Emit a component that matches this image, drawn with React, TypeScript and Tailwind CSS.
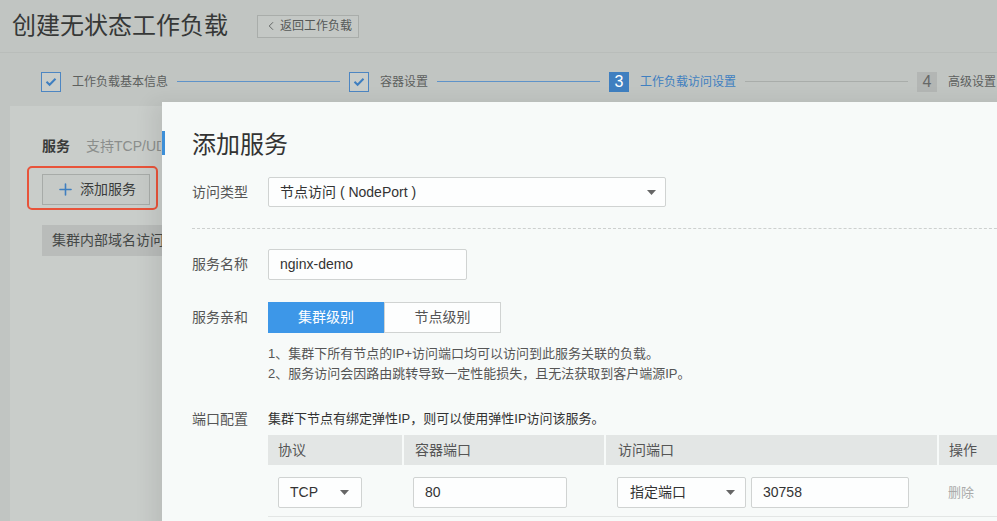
import { ChevronLeft, Plus } from 'lucide-react';

const FONT = { fontFamily: '"Liberation Sans", "Noto Sans CJK SC", sans-serif' };

function DoneBox() {
  return (
    <div className="shrink-0 w-[20px] h-[20px] border border-[#4d86c2] bg-[#c9cdca] flex items-center justify-center">
      <svg width="12" height="10" viewBox="0 0 12 10" fill="none">
        <path d="M1.5 4.8 L4.6 7.8 L10.5 1.8" stroke="#3f7fc0" strokeWidth="2" />
      </svg>
    </div>
  );
}

function Caret() {
  return (
    <svg width="9" height="5" viewBox="0 0 9 5" className="shrink-0">
      <path d="M0 0 H9 L4.5 5 Z" fill="#666" />
    </svg>
  );
}

function StepLine({ done }: { done: boolean }) {
  return <div className={`shrink-0 w-[163px] h-px mx-[9px] ${done ? 'bg-[#5f93c9]' : 'bg-[#a9adaa]'}`} />;
}

export default function App() {
  return (
    <div style={FONT} className="relative w-[997px] h-[521px] overflow-hidden bg-[#c1c5c2] text-[#383a39]">
      {/* page under the dialog */}
      <div className="h-[53px] flex items-center pl-[12px] border-b border-[#b9bdba]">
        <h1 className="text-[24px] leading-[32px] text-[#363837]">创建无状态工作负载</h1>
        <button className="ml-[29px] h-[23px] px-[6px] flex items-center gap-[2px] border border-[#a9adaa] text-[12px] text-[#555857] bg-[#c4c8c5]">
          <ChevronLeft size={14} strokeWidth={1.5} />
          返回工作负载
        </button>
      </div>

      <div className="h-[53px] pt-[4px] flex items-center pl-[41px] text-[12px] whitespace-nowrap">
        <DoneBox />
        <span className="shrink-0 ml-[11px] text-[#5d605e]">工作负载基本信息</span>
        <StepLine done />
        <DoneBox />
        <span className="shrink-0 ml-[11px] text-[#5d605e]">容器设置</span>
        <StepLine done />
        <div className="shrink-0 w-[20px] h-[20px] bg-[#3f7fc0] text-white text-[16px] leading-[20px] text-center">3</div>
        <span className="shrink-0 ml-[11px] text-[#3f7fc0]">工作负载访问设置</span>
        <StepLine done={false} />
        <div className="shrink-0 w-[20px] h-[20px] bg-[#b3b6b4] text-[#666867] text-[16px] leading-[20px] text-center">4</div>
        <span className="shrink-0 ml-[11px] text-[#5d605e]">高级设置</span>
      </div>

      <div className="ml-[10px] w-[960px] h-[420px] bg-[#c9cdca] pl-[32px] pt-[30px]">
        <div className="flex items-center h-[20px] w-[119px] overflow-hidden whitespace-nowrap text-[14px]">
          <span className="font-bold text-[#3a3c3b]">服务</span>
          <span className="ml-[16px] text-[#8b8e8c]">支持TCP/UDP协议</span>
        </div>
        <div className="relative mt-[18px] w-[108px] h-[31px]">
          <button className="w-full h-full flex items-center justify-center gap-[5px] border border-[#a7aba8] bg-[#c6cac7] text-[14px] text-[#3a3c3b]">
            <Plus size={19} strokeWidth={2} color="#3f7fc0" />
            添加服务
          </button>
          <div className="absolute -left-[15px] -top-[8px] w-[131px] h-[44px] rounded-[5px] border-2 border-[#e8533a]" />
        </div>
        <div className="mt-[20px] h-[31px] w-[120px] overflow-hidden whitespace-nowrap bg-[#b9bcba] flex items-center pl-[10px] text-[14px] text-[#444746]">
          集群内部域名访问
        </div>
      </div>

      {/* dialog */}
      <div className="absolute left-[162px] top-[102px] w-[860px] h-[440px] bg-[#f7faf9] pl-[30px] pt-[27px] shadow-[-10px_0_18px_rgba(0,0,0,0.07)] text-[#333]">
        <div className="absolute left-0 top-[29px] w-[3px] h-[24px] bg-[#3d8fd8]" />
        <h2 className="text-[24px] leading-[32px] h-[32px] text-[#333]">添加服务</h2>

        <div className="mt-[16px] flex items-center">
          <label className="w-[76px] text-[14px] text-[#555]">访问类型</label>
          <div className="w-[398px] h-[30px] border border-[#d0d3d2] rounded-[2px] bg-[#fdfefe] flex items-center justify-between pl-[11px] pr-[9px] text-[14px]">
            <span>节点访问 ( NodePort )</span>
            <Caret />
          </div>
        </div>

        <div className="mt-[21px] border-t border-dashed border-[#cdd0cf]" />

        <div className="mt-[20px] flex items-center">
          <label className="w-[76px] text-[14px] text-[#555]">服务名称</label>
          <div className="w-[199px] h-[31px] border border-[#d0d3d2] rounded-[2px] bg-[#fdfefe] flex items-center pl-[11px] text-[14px]">
            nginx-demo
          </div>
        </div>

        <div className="mt-[22px] flex items-center">
          <label className="w-[76px] text-[14px] text-[#555]">服务亲和</label>
          <div className="flex h-[31px] text-[14px]">
            <div className="w-[116px] bg-[#3d97e8] text-white flex items-center justify-center">集群级别</div>
            <div className="w-[117px] border border-[#d0d3d2] bg-[#fdfefe] text-[#555] flex items-center justify-center">节点级别</div>
          </div>
        </div>

        <div className="mt-[11px] ml-[76px] text-[13px] leading-[20px] text-[#555]">
          <p>1、集群下所有节点的IP+访问端口均可以访问到此服务关联的负载。</p>
          <p>2、服务访问会因路由跳转导致一定性能损失，且无法获取到客户端源IP。</p>
        </div>

        <div className="mt-[25px] flex items-center leading-[20px]">
          <label className="w-[76px] text-[14px] text-[#555]">端口配置</label>
          <span className="text-[13px] text-[#333]">集群下节点有绑定弹性IP，则可以使用弹性IP访问该服务。</span>
        </div>

        <div className="mt-[6px] ml-[76px] w-[760px] text-[14px]">
          <div className="grid grid-cols-[134px_202px_333px_1fr] h-[30px] bg-[#e3e6e5] text-[#555]">
            <div className="flex items-center pl-[10px]">协议</div>
            <div className="flex items-center pl-[11px] border-l-2 border-[#f7faf9]">容器端口</div>
            <div className="flex items-center pl-[12px] border-l-2 border-[#f7faf9]">访问端口</div>
            <div className="flex items-center pl-[10px] border-l-2 border-[#f7faf9]">操作</div>
          </div>
          <div className="grid grid-cols-[134px_202px_333px_1fr] h-[52px] pt-[12px] border-b border-[#e3e6e5]">
            <div className="pl-[10px]">
              <div className="w-[84px] h-[31px] border border-[#d0d3d2] rounded-[2px] bg-[#fdfefe] flex items-center justify-between pl-[11px] pr-[12px]">
                <span>TCP</span>
                <Caret />
              </div>
            </div>
            <div className="pl-[11px]">
              <div className="w-[154px] h-[31px] border border-[#d0d3d2] rounded-[2px] bg-[#fdfefe] flex items-center pl-[11px]">80</div>
            </div>
            <div className="pl-[13px] flex gap-[5px]">
              <div className="w-[129px] h-[31px] border border-[#d0d3d2] rounded-[2px] bg-[#fdfefe] flex items-center justify-between pl-[12px] pr-[10px]">
                <span>指定端口</span>
                <Caret />
              </div>
              <div className="w-[158px] h-[31px] border border-[#d0d3d2] rounded-[2px] bg-[#fdfefe] flex items-center pl-[11px]">30758</div>
            </div>
            <div className="pl-[11px] h-[31px] flex items-center text-[13px] text-[#aaa]">删除</div>
          </div>
        </div>
      </div>
    </div>
  );
}
